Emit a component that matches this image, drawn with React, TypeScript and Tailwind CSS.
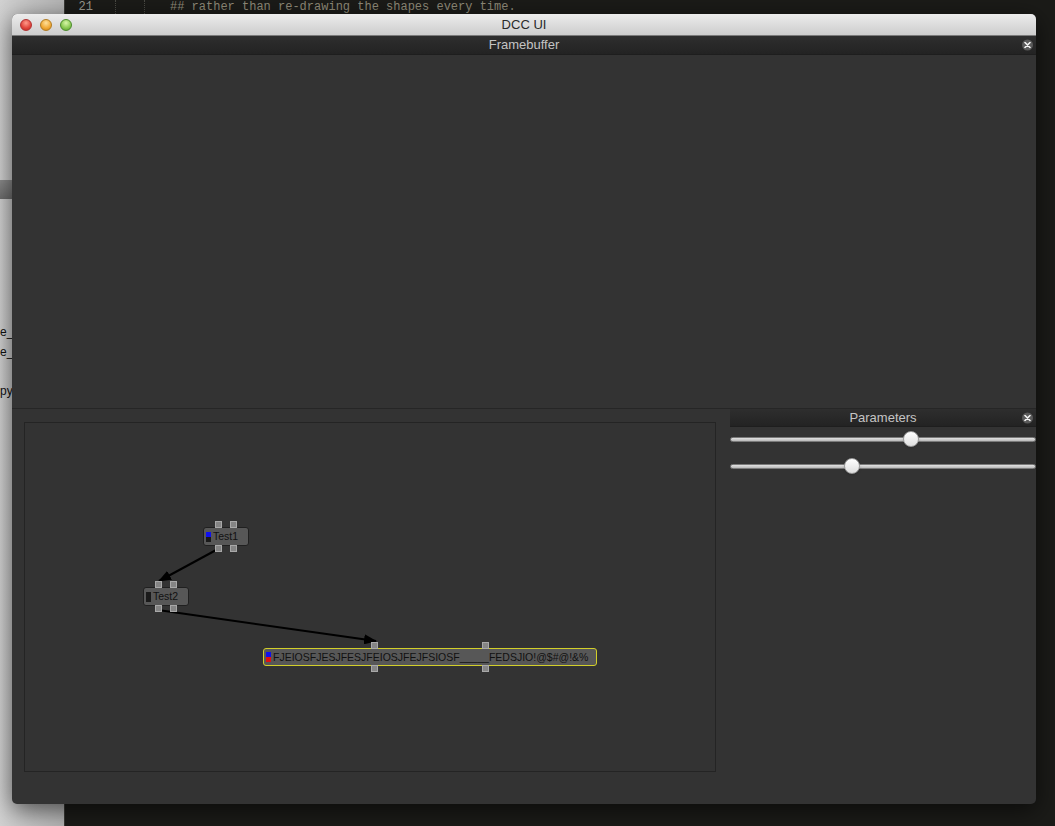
import React from "react";

type Port = { left: number };

type GraphNode = {
  id: string;
  label: string;
  left: number;
  top: number;
  width: number;
  selected?: boolean;
  colors: [string, string];
  ports: Port[];
};

// node positions are relative to the graph view
const nodes: GraphNode[] = [
  { id: "t1", label: "Test1", left: 178, top: 104, width: 46, colors: ["#1010f0", "#1a1a1a"], ports: [{ left: 15 }, { left: 30 }] },
  { id: "t2", label: "Test2", left: 118, top: 164, width: 46, colors: ["#1a1a1a", "#1a1a1a"], ports: [{ left: 15 }, { left: 30 }] },
  {
    id: "big",
    label: "FJEIOSFJESJFESJFEIOSJFEJFSIOSF_____FEDSJIO!@$#@!&%",
    left: 238,
    top: 225,
    width: 334,
    selected: true,
    colors: ["#1010f0", "#e01010"],
    ports: [{ left: 111 }, { left: 222 }],
  },
];

const sliders = [0.59, 0.4];

function CloseButton() {
  return (
    <div className="flex h-[11px] w-[11px] items-center justify-center rounded-full bg-[#5a5a5a]">
      <svg width="7" height="7" viewBox="0 0 7 7">
        <path d="M1 1L6 6M6 1L1 6" stroke="#f4f4f4" strokeWidth="1.6" strokeLinecap="round" />
      </svg>
    </div>
  );
}

function DockTitle({ title, h }: { title: string; h: string }) {
  return (
    <div
      className={`relative flex ${h} items-center justify-center border-b border-[#1e1e1e] bg-gradient-to-b from-[#2e2e2e] to-[#232323]`}
    >
      <span className="text-[13px] text-[#c4c4c4]">{title}</span>
      <div className="absolute right-[3px] top-1/2 -translate-y-1/2">
        <CloseButton />
      </div>
    </div>
  );
}

function PortBox() {
  return <div className="h-[7px] w-[7px] border border-[#a8a8a8] bg-[#858585]" />;
}

function Node({ node }: { node: GraphNode }) {
  const h = node.selected ? 18 : 19;
  return (
    <div className="absolute" style={{ left: node.left, top: node.top, width: node.width, height: h }}>
      {node.ports.map((p, i) => (
        <div key={"t" + i} className="absolute top-[-6px]" style={{ left: p.left - 3 }}>
          <PortBox />
        </div>
      ))}
      {node.ports.map((p, i) => (
        <div key={"b" + i} className="absolute bottom-[-6px]" style={{ left: p.left - 3 }}>
          <PortBox />
        </div>
      ))}
      <div
        className={`flex h-full w-full items-center gap-[2px] rounded-[3px] bg-[#575757] pl-[2px] ${
          node.selected ? "border border-[#d2cf2a]" : "border border-[#202020]"
        }`}
      >
        <div className="flex flex-col">
          <div className="h-[5px] w-[5px]" style={{ background: node.colors[0] }} />
          <div className="h-[5px] w-[5px]" style={{ background: node.colors[1] }} />
        </div>
        <span className="whitespace-nowrap text-[10.5px] leading-none text-[#111]">{node.label}</span>
      </div>
    </div>
  );
}

function Slider({ value }: { value: number }) {
  return (
    <div className="relative flex h-[14px] items-center">
      <div className="h-[5px] w-full rounded-full border border-[#7a7a7a] bg-gradient-to-b from-[#e2e2e2] to-[#b8b8b8]" />
      <div
        className="absolute top-1/2 h-[16px] w-[16px] -translate-x-1/2 -translate-y-1/2 rounded-full border border-[#9a9a9a] bg-gradient-to-b from-[#ffffff] to-[#dedede] shadow"
        style={{ left: `${value * 100}%` }}
      />
    </div>
  );
}

export default function App() {
  return (
    <div
      className="relative h-[826px] w-[1055px] overflow-hidden"
      style={{ fontFamily: '"Liberation Sans", "DejaVu Sans", sans-serif' }}
    >
      {/* desktop behind the window */}
      <div className="flex h-full">
        <div className="relative w-[64px] bg-gradient-to-r from-[#d2d2d2] to-[#b4b4b4]">
          <div className="absolute left-0 right-0 top-[180px] h-[19px] bg-gradient-to-b from-[#8c8c8c] to-[#6e6e6e]" />
          <div className="absolute left-0 top-[322px] flex flex-col text-[12px] leading-[20px] text-[#111]">
            <span>e_</span>
            <span>e_</span>
            <span className="mt-[19px]">py</span>
          </div>
        </div>
        <div className="flex-1 border-l border-[#3a3a36] bg-[#1b1b18] font-mono text-[12px] text-[#8f8a78]">
          <div className="flex h-[14px] items-center">
            <span className="w-[28px] text-right text-[#9a9a90]">21</span>
            <span className="ml-[22px] h-full border-l border-dotted border-[#4a4a44]" />
            <span className="ml-[28px] h-full border-l border-dotted border-[#4a4a44]" />
            <span className="ml-[25px]">## rather than re-drawing the shapes every time.</span>
          </div>
        </div>
      </div>

      {/* application window */}
      <div className="absolute left-[12px] top-[14px] flex h-[790px] w-[1024px] flex-col overflow-hidden rounded-[5px] bg-[#333333] shadow-[0_6px_24px_rgba(0,0,0,0.6)]">
        <div className="relative flex h-[22px] items-center justify-center border-b border-[#7a7a7a] bg-gradient-to-b from-[#ececec] to-[#cdcdcd]">
          <div className="absolute left-[8px] top-1/2 flex -translate-y-1/2 gap-[8px]">
            <div className="h-[12px] w-[12px] rounded-full border border-[#b03030] bg-[radial-gradient(circle_at_50%_30%,#ff9a8a,#e0443a_60%,#b82c24)]" />
            <div className="h-[12px] w-[12px] rounded-full border border-[#b07a20] bg-[radial-gradient(circle_at_50%_30%,#ffe09a,#f0a834_60%,#c87e18)]" />
            <div className="h-[12px] w-[12px] rounded-full border border-[#4a8a2a] bg-[radial-gradient(circle_at_50%_30%,#d8f6a8,#88c850_60%,#5a9a30)]" />
          </div>
          <span className="text-[13px] text-[#2a2a2a]">DCC UI</span>
        </div>

        <DockTitle title="Framebuffer" h="h-[19px]" />
        <div className="h-[354px] border-b border-[#262626] bg-[#333333]" />

        <div className="flex flex-1">
          <div className="pl-[12px] pt-[13px]">
            <div className="relative h-[350px] w-[692px] border border-[#242424] bg-[#333333]">
              <svg className="absolute inset-0" width="692" height="350">
                <defs>
                  <marker id="arrow" markerWidth="13" markerHeight="10" refX="12" refY="5" orient="auto" markerUnits="userSpaceOnUse">
                    <path d="M0 0L13 5L0 10Z" fill="#000" />
                  </marker>
                </defs>
                <line x1="193" y1="126" x2="134" y2="158" stroke="#000" strokeWidth="2" markerEnd="url(#arrow)" />
                <line x1="133" y1="187" x2="351" y2="218" stroke="#000" strokeWidth="2" markerEnd="url(#arrow)" />
              </svg>
              {nodes.map((n) => (
                <Node key={n.id} node={n} />
              ))}
            </div>
          </div>

          <div className="ml-[14px] flex w-[306px] flex-col">
            <DockTitle title="Parameters" h="h-[18px]" />
            <div className="flex flex-col gap-[13px] pt-[5px]">
              {sliders.map((v, i) => (
                <Slider key={i} value={v} />
              ))}
            </div>
          </div>
        </div>
      </div>
    </div>
  );
}
